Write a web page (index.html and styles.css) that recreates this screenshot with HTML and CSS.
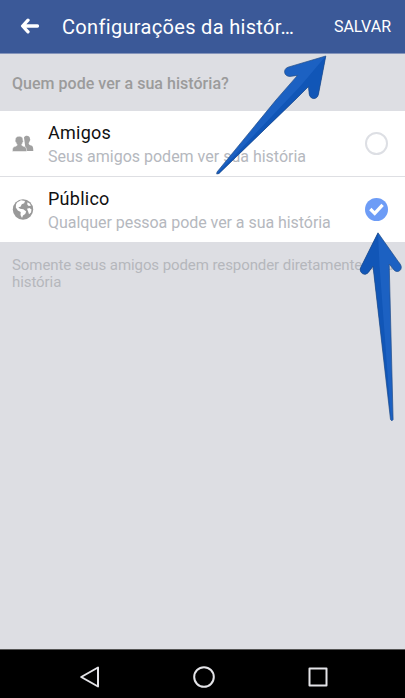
FILE: index.html
```html
<!DOCTYPE html>
<html lang="pt-BR">
<head>
<meta charset="utf-8">
<title>Configurações da história</title>
<link rel="stylesheet" href="styles.css">
</head>
<body>
<div class="phone">
  <header class="topbar">
    <svg class="back" width="20" height="16" viewBox="0 0 20 16"><path d="M8 2.200 2.600 8l5.400 5.800M3.500 8H17.500" fill="none" stroke="#fff" stroke-width="3.300" stroke-linecap="round" stroke-linejoin="round"/></svg>
    <h1 class="title">Configurações da histór…</h1>
    <button class="save">SALVAR</button>
  </header>
  <main class="content">
    <h2 class="question">Quem pode ver a sua história?</h2>
    <div class="option">
      <svg class="kind" width="22" height="22" viewBox="0 0 22 22" fill="#a0a0a0"><path d="M12 4.500C13 1.800 18.100 2 18 6c.5.500.3 1.600-.3 2-.2.900-.6 1.500-1.100 2 .1 1.700 1.100 2 2.700 2.600 1.600.6 2 2 2 5.400h-7.500z"/><path d="M3.200 7.500C3.100 4.500 4.700 3.200 7.200 3.200s4 1.300 3.800 4.300c.6.300.4 1.500-.3 2-.2.900-.5 1.500-1 2 .1 1.400.8 1.500 2.700 2.100 1.800.5 2.200 1.800 2.200 4.900H.4c0-3.100.4-4.400 2.200-4.900 1.900-.6 2.500-.7 2.500-2.100-.5-.5-.9-1.100-1.100-2-.7-.5-1.100-1.700-.8-2z" stroke="#fff" stroke-width=".5"/></svg>
      <div class="text"><div class="name">Amigos</div><div class="desc">Seus amigos podem ver sua história</div></div>
      <span class="radio"></span>
    </div>
    <div class="option last">
      <svg class="kind" width="22" height="22" viewBox="0 0 22 22"><circle cx="11" cy="10.500" r="10.200" fill="#999"/><path d="M5 3.500 9 1.300l4 .7-.8 2.300-2.400 1-1.300 2.400-2.200.6 1.700 1.400 3.400.5 2.800 2.300-1 2.600-2.200 1.300-1 2.500-1.500-3 .2-2.800-2.900-1.600-2-3 .2-3zM15.500 3.200l2.500 1.500.8 2.300-2.600-.3-1-1.500zM15 9.700l2.500-.7 2 1.500-.5 3-2 1.800-.7-2.300z" fill="#fff"/></svg>
      <div class="text"><div class="name">Público</div><div class="desc desc-public">Qualquer pessoa pode ver a sua história</div></div>
      <span class="radio checked"><svg width="23" height="23" viewBox="0 0 23 23"><path d="m6.500 12.200 3.200 3.200 6.800-7.400" fill="none" stroke="#fff" stroke-width="3.300" stroke-linecap="square"/></svg></span>
    </div>
    <p class="note">Somente seus amigos podem responder diretamente à sua<br>história</p>
  </main>
  <nav class="navbar">
    <svg width="22" height="24" viewBox="0 0 22 24"><path d="M2.200 12 19 2.500v19z"/></svg>
    <svg width="24" height="24" viewBox="0 0 24 24"><circle cx="12" cy="12" r="9.800"/></svg>
    <svg width="22" height="24" viewBox="0 0 22 24"><rect x="2.500" y="3.500" width="17" height="17"/></svg>
  </nav>
  <svg class="pointers" width="405" height="698" viewBox="0 0 405 698">
    <path class="light" d="M325.800 56 288 67.200c-5.500 2-4 9.500 2 9.200l7.500-1L276 100l-59 72-.3 2 2.300-.5L295 100l13.500-13.500.7 7.500c1 6 8 6 9.200.5z"/>
    <path class="dark" d="M325.800 56 300 86.500 217 174l2-.5L295 100l13.500-13.500.7 7.500c1 6 8 6 9.200.5z"/>
    <path class="light" d="M378 232.800 360.700 267.500c-2.200 5 4 9.500 7.800 4.700l4.500-6 17.500 153.300q1.500 2.500 2.600 0L389.200 264l4.800 6c4 4 9-.5 6.700-5z"/>
    <path class="dark" d="M378 232.800 360.700 267.500c-2.200 5 4 9.500 7.800 4.700l4.500-6 18 154L379.500 265z"/>
    <path class="edge" d="M325.800 56 288 67.200c-5.500 2-4 9.500 2 9.200l7.500-1L276 100l-59 72-.3 2 2.300-.5L295 100l13.500-13.500.7 7.500c1 6 8 6 9.200.5zM378 232.800 360.700 267.500c-2.200 5 4 9.500 7.800 4.700l4.500-6 17.500 153.300q1.500 2.500 2.600 0L389.200 264l4.800 6c4 4 9-.5 6.700-5z"/>
  </svg>
</div>
</body>
</html>
```
FILE: styles.css
```css
* { box-sizing: border-box; }
body { margin: 0; font-family: Roboto, sans-serif; }
.phone { position: relative; width: 405px; height: 698px; display: flex; flex-direction: column; overflow: hidden; background: #dddee3; }
.topbar { height: 54px; display: flex; align-items: center; padding: 0 14px 0 20px; background: #3b5998; border-bottom: 1px solid #8494bb; color: #fff; }
.back { flex: none; margin: -1px 22px 0 0; }
.title { margin: 0; flex: 1; font-size: 20px; line-height: 28px; font-weight: 400; white-space: nowrap; letter-spacing: 0.32px; }
.save { border: 0; padding: 0; background: none; color: #fff; font: 400 16px/24px Roboto, sans-serif; }
.content { flex: 1; }
.question { margin: 0; height: 57px; padding: 0 12px; font-size: 16px; line-height: 60px; font-weight: 500; letter-spacing: 0.03px; color: #9b9b9b; }
.option { display: flex; align-items: center; height: 66px; padding: 0 17px 0 12px; background: #fff; border-bottom: 1px solid #dedfe3; }
.option.last { height: 65px; border-bottom: 0; }
.kind { flex: none; margin-right: 14px; }
.text { flex: 1; padding-top: 1px; white-space: nowrap; }
.name { font-size: 18px; line-height: 23px; letter-spacing: 0.25px; color: #111; }
.desc { padding-top: 1px; font-size: 16px; line-height: 23px; color: #b5b8be; }
.desc-public { letter-spacing: -0.05px; }
.radio { flex: none; width: 23px; height: 23px; border: 2px solid #dddfe4; border-radius: 50%; }
.radio.checked { border: 0; background: #6d9cf6; }
.radio svg { display: block; }
.note { margin: 0; padding: 15px 12px; font-size: 15px; line-height: 17px; letter-spacing: -0.08px; color: #b5b7bc; white-space: nowrap; }
.navbar { height: 49px; display: flex; align-items: center; justify-content: space-between; padding: 5px 76px 0 79px; background: #000; border-top: 1px solid #555; }
.navbar svg { fill: none; stroke: #e4e4e8; stroke-width: 2; stroke-linejoin: round; }
.pointers { position: absolute; inset: 0; pointer-events: none; }
.light { fill: #1c61c2; }
.dark { fill: #1156b7; }
.edge { fill: none; stroke: #234e88; stroke-width: 0.7; }
```
